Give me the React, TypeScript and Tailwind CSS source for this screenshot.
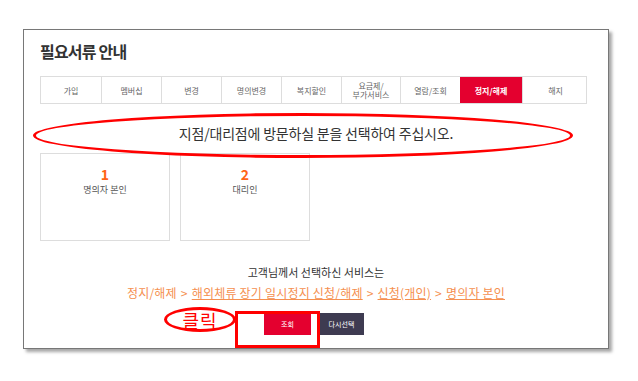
import React from "react"

const tabs = [
    "가입",
    "멤버십",
    "변경",
    "명의변경",
    "복지할인",
    "요금제/\n부가서비스",
    "열람/조회",
    "정지/해제",
    "해지",
]

const font = { fontFamily: '"Noto Sans CJK KR", "Noto Sans", sans-serif' }

export default function App() {
    return (
        <div className="w-[638px] h-[381px] bg-white pt-[29px] pl-[23px]" style={font}>
            {/* Document frame */}
            <div className="relative w-[586px] h-[320px] border border-[#777] bg-white shadow-[3px_3px_3px_rgba(0,0,0,0.35)] px-[16px]">
                <h1 className="mt-[10px] text-[16px] leading-[22px] font-semibold text-[#333] tracking-[-0.8px]">
                    필요서류 안내
                </h1>

                {/* Tabs */}
                <div className="mt-[14px] w-[547px] h-[28px] grid grid-cols-[60px_60px_60px_60px_60px_59px_60px_62px_66px] border border-[#ddd]">
                    {tabs.map((t, i) => {
                        const active = t === "정지/해제"
                        return (
                            <div
                                key={t}
                                className={
                                    active
                                        ? "flex items-center justify-center bg-[#e4002f] text-white font-bold text-[8px] leading-[9px] text-center"
                                        : "flex items-center justify-center text-[#666] text-[8px] leading-[9px] text-center whitespace-pre-line " +
                                          (i > 0 ? "border-l border-[#ddd]" : "")
                                }
                            >
                                {t}
                            </div>
                        )
                    })}
                </div>

                <p className="mt-[19px] text-center text-[14px] leading-[20px] text-[#333] tracking-[-0.2px]">
                    지점/대리점에 방문하실 분을 선택하여 주십시오.
                </p>

                {/* Choices */}
                <div className="mt-[10px] flex gap-[10px]">
                    <div className="w-[130px] h-[88px] border border-[#ddd] flex flex-col items-center pt-[10px]">
                        <span className="text-[14px] leading-[20px] font-bold text-[#ff6414]">1</span>
                        <span className="text-[9px] leading-[12px] text-[#555]">명의자 본인</span>
                    </div>
                    <div className="w-[130px] h-[88px] border border-[#ddd] flex flex-col items-center pt-[10px]">
                        <span className="text-[14px] leading-[20px] font-bold text-[#ff6414]">2</span>
                        <span className="text-[9px] leading-[12px] text-[#555]">대리인</span>
                    </div>
                </div>

                <p className="mt-[23px] text-center text-[11px] leading-[16px] text-[#333]">
                    고객님께서 선택하신 서비스는
                </p>
                <p className="mt-[4px] text-center text-[12px] leading-[18px] text-[#f59050] tracking-[0.2px]">
                    <span>정지/해제</span>
                    <span className="mx-[4px]">&gt;</span>
                    <span className="underline">해외체류 장기 일시정지 신청/해제</span>
                    <span className="mx-[4px]">&gt;</span>
                    <span className="underline">신청(개인)</span>
                    <span className="mx-[4px]">&gt;</span>
                    <span className="underline">명의자 본인</span>
                </p>

                <div className="mt-[11px] flex justify-center gap-[8px] pr-[4px]">
                    <button className="w-[47px] h-[22px] bg-[#e4002f] text-white text-[7px]">조회</button>
                    <button className="w-[45px] h-[22px] bg-[#3e3b51] text-white text-[7px]">다시선택</button>
                </div>

                {/* Red annotations */}
                <div className="absolute left-[9px] top-[83px] w-[540px] h-[45px] rounded-[50%] border-[3px] border-[#ff0000]" />
                <div className="absolute left-[211px] top-[281px] w-[85px] h-[37px] border-[3px] border-[#ff0000]" />
                <div className="absolute left-[140px] top-[277px] w-[72px] h-[25px] rounded-[50%] border-[3px] border-[#ff0000] flex items-center justify-center">
                    <span className="text-[18px] leading-[20px] text-[#ff0000] tracking-[1px]">클릭</span>
                </div>
            </div>
        </div>
    )
}
